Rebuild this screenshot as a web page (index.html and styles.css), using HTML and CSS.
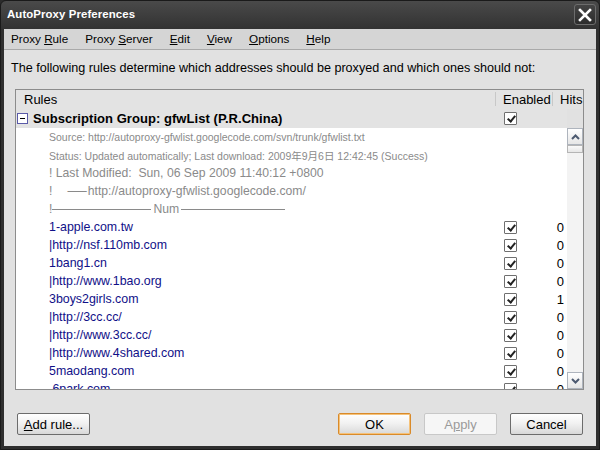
FILE: index.html
```html
<!DOCTYPE html>
<html>
<head>
<meta charset="utf-8">
<link rel="stylesheet" href="styles.css">
</head>
<body>
<div class="window">
  <div class="titlebar">
    <span class="title">AutoProxy Preferences</span>
    <span class="close"><svg width="14" height="14" viewBox="0 0 14 14"><path d="M2 2 L12 12 M12 2 L2 12" stroke="#fff" stroke-width="2.6" stroke-linecap="square"/></svg></span>
  </div>
  <div class="dialog">
    <div class="menubar">
      <span class="menu">Proxy <u>R</u>ule</span>
      <span class="menu">Proxy <u>S</u>erver</span>
      <span class="menu"><u>E</u>dit</span>
      <span class="menu"><u>V</u>iew</span>
      <span class="menu"><u>O</u>ptions</span>
      <span class="menu"><u>H</u>elp</span>
    </div>
    <p class="desc">The following rules determine which addresses should be proxyed and which ones should not:</p>
    <div class="tree">
      <div class="thead">
        <span class="th th-rules">Rules</span>
        <span class="th th-enabled">Enabled</span>
        <span class="th th-hits">Hits</span>
      </div>
      <div class="tbody">
        <div class="list">
          <div class="row group">
            <span class="cell rule"><span class="twisty"></span><b>Subscription Group: gfwList (P.R.China)</b></span>
            <span class="cell en"><span class="cb"></span></span>
            <span class="cell hits"></span>
          </div>
          <div class="row info"><span class="cell rule">Source: http://autoproxy-gfwlist.googlecode.com/svn/trunk/gfwlist.txt</span></div>
          <div class="row info"><span class="cell rule">Status: Updated automatically; Last download: 2009年9月6日 12:42:45 (Success)</span></div>
          <div class="row comment"><span class="cell rule">! Last Modified:&nbsp; Sun, 06 Sep 2009 11:40:12 +0800</span></div>
          <div class="row comment"><span class="cell rule">!<span class="gap"></span><span class="dash">——</span>http://autoproxy-gfwlist.googlecode.com/</span></div>
          <div class="row comment"><span class="cell rule">!<span class="hr hr1"></span>Num<span class="hr hr2"></span></span></div>
          <div class="row item"><span class="cell rule">1-apple.com.tw</span><span class="cell en"><span class="cb"></span></span><span class="cell hits">0</span></div>
          <div class="row item"><span class="cell rule">|http://nsf.110mb.com</span><span class="cell en"><span class="cb"></span></span><span class="cell hits">0</span></div>
          <div class="row item"><span class="cell rule">1bang1.cn</span><span class="cell en"><span class="cb"></span></span><span class="cell hits">0</span></div>
          <div class="row item"><span class="cell rule">|http://www.1bao.org</span><span class="cell en"><span class="cb"></span></span><span class="cell hits">0</span></div>
          <div class="row item"><span class="cell rule">3boys2girls.com</span><span class="cell en"><span class="cb"></span></span><span class="cell hits">1</span></div>
          <div class="row item"><span class="cell rule">|http://3cc.cc/</span><span class="cell en"><span class="cb"></span></span><span class="cell hits">0</span></div>
          <div class="row item"><span class="cell rule">|http://www.3cc.cc/</span><span class="cell en"><span class="cb"></span></span><span class="cell hits">0</span></div>
          <div class="row item"><span class="cell rule">|http://www.4shared.com</span><span class="cell en"><span class="cb"></span></span><span class="cell hits">0</span></div>
          <div class="row item"><span class="cell rule">5maodang.com</span><span class="cell en"><span class="cb"></span></span><span class="cell hits">0</span></div>
          <div class="row item"><span class="cell rule">.6park.com</span><span class="cell en"><span class="cb"></span></span><span class="cell hits">0</span></div>
        </div>
        <div class="scrollbar">
          <span class="sbtn"><svg width="9" height="6" viewBox="0 0 9 6"><path d="M1 5 L4.5 1.5 L8 5" fill="none" stroke="#4d5a70" stroke-width="2"/></svg></span>
          <span class="thumb"></span>
          <span class="track"></span>
          <span class="sbtn"><svg width="9" height="6" viewBox="0 0 9 6"><path d="M1 1 L4.5 4.5 L8 1" fill="none" stroke="#4d5a70" stroke-width="2"/></svg></span>
        </div>
      </div>
    </div>
    <div class="buttons">
      <span class="btn"><u>A</u>dd rule...</span>
      <span class="spacer"></span>
      <span class="btn default">OK</span>
      <span class="btn disabled">A<u>p</u>ply</span>
      <span class="btn">Cancel</span>
    </div>
  </div>
</div>
</body>
</html>
```
FILE: styles.css
```css
html, body {
  margin: 0;
  padding: 0;
  background: #2b2b2b;
}
body {
  font-family: "Liberation Sans", Arial, "Noto Sans CJK SC", sans-serif;
  font-size: 13px;
  color: #000;
}
.window {
  width: 600px;
  height: 450px;
  box-sizing: border-box;
  background: linear-gradient(#4a4a4a, #303030 30px, #2e2e2e);
  border: 1px solid #1a1a1a;
  border-radius: 6px 6px 0 0;
  padding: 0 3px 3px 3px;
  display: flex;
  flex-direction: column;
}
.titlebar {
  height: 28px;
  display: flex;
  align-items: center;
  justify-content: space-between;
  padding: 0 0 0 3px;
  flex: none;
}
.title {
  color: #fff;
  font-weight: bold;
  font-family: "Liberation Sans", Arial, sans-serif;
  font-size: 11.4px;
  letter-spacing: 0.1px;
  margin-top: -2px;
}
.close {
  width: 22px;
  height: 21px;
  box-sizing: border-box;
  border: 1px solid #6c6c6c;
  border-radius: 3px;
  background: linear-gradient(#444, #2c2c2c);
  display: flex;
  align-items: center;
  justify-content: center;
  margin-right: 0;
  margin-top: -1px;
}
.dialog {
  flex: 1;
  background: #e1e1e1;
  display: flex;
  flex-direction: column;
}
.menubar {
  height: 20px;
  background: #d5d5d5;
  border-bottom: 1px solid #a9a9a9;
  display: flex;
  align-items: center;
  padding-left: 7px;
  flex: none;
  font-size: 11.7px;
}
.menu {
  margin-right: 17px;
  line-height: 20px;
}
.desc {
  margin: 10px 0 0 7px;
  line-height: 16px;
  height: 16px;
  font-size: 12.6px;
}
.tree {
  margin: 13px 12px 0 11px;
  border: 1px solid #8c8c8c;
  height: 299px;
  display: flex;
  flex-direction: column;
  overflow: hidden;
  flex: none;
}
.thead {
  height: 19px;
  display: grid;
  grid-template-columns: 479px 57px 1fr;
  background: #e3e3e3;
  flex: none;
}
.th {
  line-height: 19px;
}
.th-rules { padding-left: 8px; }
.th-enabled { padding-left: 7px; border-left: 1px solid #c8c8c8; height: 14px; margin-top: 2px; line-height: 15px; }
.th-hits { padding-left: 7px; border-left: 1px solid #c8c8c8; height: 14px; margin-top: 2px; line-height: 15px; }
.tbody {
  flex: 1;
  display: flex;
  overflow: hidden;
}
.list {
  flex: 1;
  background: #fff;
  overflow: hidden;
}
.row {
  display: grid;
  grid-template-columns: 479px 57px 1fr;
  height: 18px;
  align-items: center;
}
.row.group {
  height: 19px;
  background: #e3e3e3;
}
.cell.rule {
  padding-left: 33px;
  white-space: nowrap;
  display: flex;
  align-items: center;
}
.group .cell.rule {
  padding-left: 1px;
  font-size: 13px;
}
.group b { letter-spacing: 0.05px; }
.twisty {
  width: 9px;
  height: 9px;
  border: 1px solid #5a5aa8;
  background: #fff;
  margin-right: 5px;
  position: relative;
  flex: none;
}
.twisty::after {
  content: "";
  position: absolute;
  left: 2px;
  top: 4px;
  width: 5px;
  height: 1px;
  background: #000;
}
.info .cell.rule {
  color: #8a8a8a;
  font-size: 10.5px;
}
.comment .cell.rule {
  color: #8a8a8a;
  font-size: 12.2px;
}
.gap { display: inline-block; width: 15px; }
.dash { letter-spacing: -5px; margin-right: 6px; }
.hr {
  display: inline-block;
  height: 1px;
  background: #8a8a8a;
}
.hr1 { width: 99px; margin-right: 2px; }
.hr2 { width: 104px; margin-left: 2px; }
.item .cell.rule {
  color: #101088;
  font-size: 12.4px;
}
.cell.en {
  padding-left: 9px;
  display: flex;
  align-items: center;
}
.cb {
  width: 13px;
  height: 13px;
  box-sizing: border-box;
  border: 1px solid #6f6f6f;
  border-radius: 1px;
  background: #fff;
  position: relative;
}
.cb::after {
  content: "";
  position: absolute;
  left: 3.5px;
  top: 1px;
  width: 3px;
  height: 6px;
  border: solid #222;
  border-width: 0 2px 2px 0;
  transform: rotate(40deg);
}
.cell.hits {
  text-align: right;
  padding-right: 3px;
}
.scrollbar {
  width: 16px;
  flex: none;
  margin-top: 19px;
  background: #f3f3f3;
  display: flex;
  flex-direction: column;
}
.sbtn {
  height: 17px;
  box-sizing: border-box;
  border: 1px solid #aeb4bd;
  background: linear-gradient(#ffffff, #e6e6e6);
  display: flex;
  align-items: center;
  justify-content: center;
  flex: none;
}
.thumb {
  height: 6px;
  border: 1px solid #b5b5b5;
  background: linear-gradient(#fafafa, #e6e6e6);
  flex: none;
}
.track {
  flex: 1;
}
.buttons {
  display: flex;
  margin: 23px 13px 0 13px;
  height: 22px;
  gap: 13px;
}
.spacer { flex: 1; }
.btn {
  width: 73px;
  height: 22px;
  box-sizing: border-box;
  border: 1px solid #6c6c6c;
  border-radius: 2px;
  background: linear-gradient(#ffffff, #f0f0f0 50%, #d8d8d8);
  display: flex;
  align-items: center;
  justify-content: center;
  line-height: 1;
}
.btn.default {
  border-color: #d98a2a;
  box-shadow: inset 0 0 0 1px #f5c27a;
}
.btn.disabled {
  border-color: #c8c8c8;
  background: #f6f6f6;
  color: #9a9a9a;
}
```
